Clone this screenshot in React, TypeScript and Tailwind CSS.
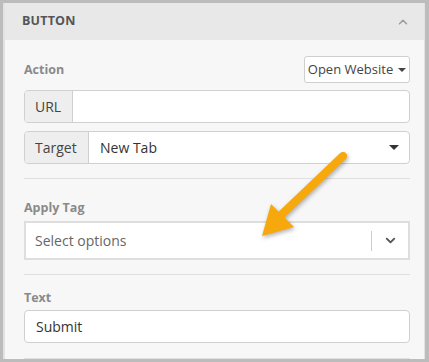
// Button settings panel (builder sidebar)
import { ChevronDown, ChevronUp } from 'lucide-react'

function Caret({ size = 'sm' }: { size?: 'sm' | 'md' }) {
  return size === 'sm' ? (
    <span className="inline-block w-0 h-0 border-x-[4px] border-x-transparent border-t-[4px] border-t-[#444]" />
  ) : (
    <span className="inline-block w-0 h-0 border-x-[5px] border-x-transparent border-t-[5px] border-t-[#333]" />
  )
}

function Label({ children }: { children: string }) {
  return <div className="text-[12.5px] font-bold text-[#8a8a8a] leading-[18px]">{children}</div>
}

function Divider() {
  return <div className="h-px bg-[#e0e0e0]" />
}

function Arrow() {
  return (
    <svg
      className="absolute left-0 top-0 pointer-events-none"
      width="429"
      height="362"
      viewBox="0 0 429 362"
      style={{ filter: 'drop-shadow(1px 2px 2px rgba(0,0,0,0.3))' }}
    >
      <line x1="343" y1="156" x2="280" y2="216" stroke="#f6a80c" strokeWidth="8" strokeLinecap="round" />
      <polygon points="262,236 271,204 294,227" fill="#f6a80c" />
    </svg>
  )
}

export default function App() {
  return (
    <div className="relative w-[429px] h-[362px] overflow-hidden bg-[#bcbcbc] pt-[3px] pl-[3px] pr-[4px] pb-[3px] font-['Open_Sans',sans-serif]">
      <div className="h-full bg-[#f7f7f7] border-l-2 border-r border-[#e2e2e2] flex flex-col">
        {/* header */}
        <div className="h-[37px] shrink-0 bg-[#e8e8e8] flex items-center justify-between pl-[17px] pr-[14px]">
          <span className="text-[12.5px] font-bold text-[#555] tracking-[0.2px]">BUTTON</span>
          <ChevronUp className="w-[14px] h-[14px] text-[#9a9a9a]" strokeWidth={2.5} />
        </div>

        <div className="pl-[19px] pr-[14px] pt-[16px]">
          {/* action */}
          <div className="flex items-center justify-between h-[27px]">
            <Label>Action</Label>
            <button className="h-[27px] w-[106px] flex items-center justify-center gap-[5px] bg-white border border-[#cfcfcf] rounded-[3px] text-[13px] text-[#444]">
              Open Website <Caret />
            </button>
          </div>

          <div className="mt-[7px] flex h-[33px] border border-[#d0d0d0] rounded-[4px] bg-white overflow-hidden">
            <div className="w-[48px] shrink-0 bg-[#eeeeee] border-r border-[#d0d0d0] flex items-center pl-[10px] text-[14px] text-[#444]">
              URL
            </div>
            <div className="flex-1" />
          </div>

          <div className="mt-[8px] flex h-[33px] border border-[#d0d0d0] rounded-[4px] bg-white overflow-hidden">
            <div className="w-[64px] shrink-0 bg-[#eeeeee] border-r border-[#d0d0d0] flex items-center pl-[10px] text-[14px] text-[#444]">
              Target
            </div>
            <div className="flex-1 flex items-center justify-between pl-[11px] pr-[10px] text-[14px] text-[#333]">
              New Tab <Caret size="md" />
            </div>
          </div>

          <div className="mt-[14px]">
            <Divider />
          </div>

          {/* apply tag */}
          <div className="mt-[20px]">
            <Label>Apply Tag</Label>
          </div>
          <div className="mt-[4px] h-[39px] flex items-center border-2 border-[#dedede] bg-white">
            <span className="flex-1 pl-[9px] text-[14px] text-[#666]">Select options</span>
            <span className="w-px h-[20px] bg-[#cfcfcf]" />
            <span className="w-[36px] flex justify-center">
              <ChevronDown className="w-[15px] h-[15px] text-[#555]" strokeWidth={3} />
            </span>
          </div>

          <div className="mt-[14px]">
            <Divider />
          </div>

          {/* text */}
          <div className="mt-[14px]">
            <Label>Text</Label>
          </div>
          <div className="mt-[3px] h-[33px] flex items-center border border-[#d0d0d0] rounded-[4px] bg-white pl-[11px] text-[14px] text-[#333]">
            Submit
          </div>

          <div className="mt-[15px]">
            <Divider />
          </div>
        </div>
      </div>
      <Arrow />
    </div>
  )
}
